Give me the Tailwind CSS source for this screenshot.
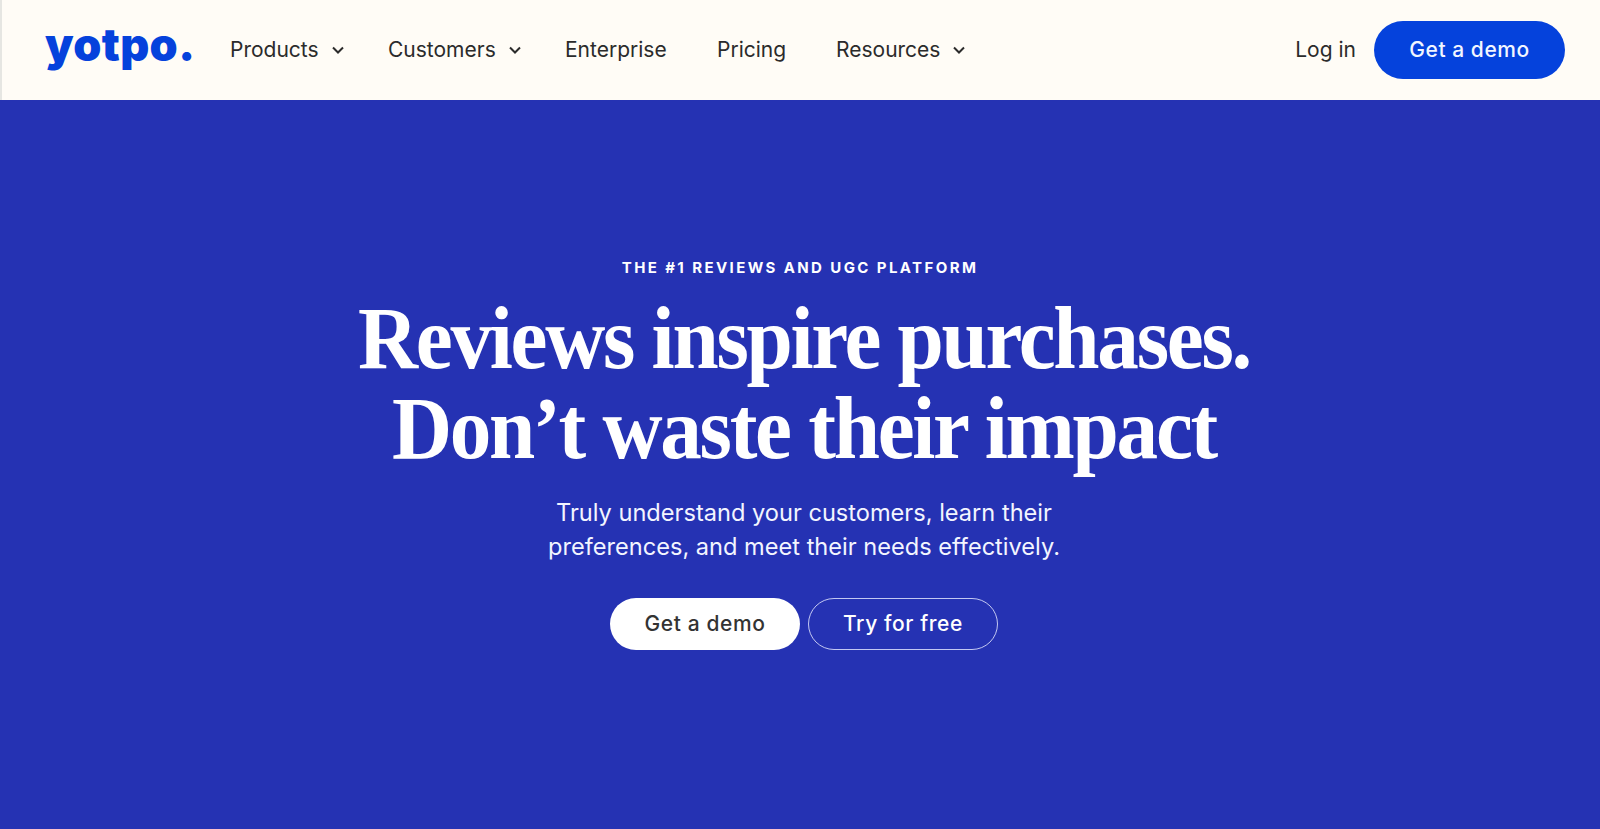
<!DOCTYPE html>
<html lang="en">
<head>
  <meta charset="UTF-8" />
  <title>Yotpo Reviews</title>
  <script src="https://cdn.jsdelivr.net/npm/@tailwindcss/browser@4"></script>
</head>
<body class="h-[829px] overflow-hidden bg-[#2532b3] font-['Inter',sans-serif]">
  <header class="flex h-[100px] items-center justify-between border-l-2 border-[#e6e6e2] bg-[#fffcf6] pl-[43px] pr-[35px]">
    <div class="flex items-center">
      <a class="w-[185px] pb-[12px] text-[45px] font-black leading-none tracking-[0.4px] text-[#0542dc]">yotpo.</a>
      <nav class="flex items-center pb-[1px] text-[21px] text-[#2b2b2b]">
        <a class="flex w-[158px] items-center gap-[12px]">Products
          <svg class="h-[14px] w-[14px]" viewBox="0 0 14 14" fill="none" stroke="currentColor" stroke-width="2"><path d="M2 4.5l5 5 5-5"/></svg>
        </a>
        <a class="flex w-[177px] items-center gap-[12px]">Customers
          <svg class="h-[14px] w-[14px]" viewBox="0 0 14 14" fill="none" stroke="currentColor" stroke-width="2"><path d="M2 4.5l5 5 5-5"/></svg>
        </a>
        <a class="w-[152px]">Enterprise</a>
        <a class="w-[119px]">Pricing</a>
        <a class="flex items-center gap-[12px]">Resources
          <svg class="h-[14px] w-[14px]" viewBox="0 0 14 14" fill="none" stroke="currentColor" stroke-width="2"><path d="M2 4.5l5 5 5-5"/></svg>
        </a>
      </nav>
    </div>
    <div class="flex items-center gap-[18px]">
      <a class="pb-[1px] text-[21px] text-[#2b2b2b]">Log in</a>
      <a class="flex h-[58px] w-[191px] items-center justify-center rounded-full bg-[#0542dc] pb-[1px] text-[21px] font-medium tracking-[0.55px] text-[#f2f6ff]">Get a demo</a>
    </div>
  </header>

  <main class="flex flex-col items-center pt-[157px] text-white">
    <p class="text-[15px] font-bold leading-[22px] tracking-[2.4px]">THE #1 REVIEWS AND UGC PLATFORM</p>
    <div class="ml-[8px] flex flex-col items-center">
      <h1 class="mt-[15px] scale-x-[0.945] whitespace-nowrap text-center font-['Liberation_Serif',serif] text-[88px] font-bold leading-[90px] tracking-[-2.4px]">Reviews inspire purchases.<br />Don’t waste their impact</h1>
      <p class="mt-[22px] text-center text-[23.6px] leading-[34px] text-[#f3f5ff]">Truly understand your customers, learn their<br />preferences, and meet their needs effectively.</p>
      <div class="mt-[34px] flex gap-[8px] text-[21px] font-medium tracking-[0.6px]">
        <a class="flex h-[52px] w-[190px] items-center justify-center rounded-full bg-white text-[#333333]">Get a demo</a>
        <a class="flex h-[52px] w-[190px] items-center justify-center rounded-full border border-[#c3c8f2] text-white">Try for free</a>
      </div>
    </div>
  </main>
</body>
</html>
